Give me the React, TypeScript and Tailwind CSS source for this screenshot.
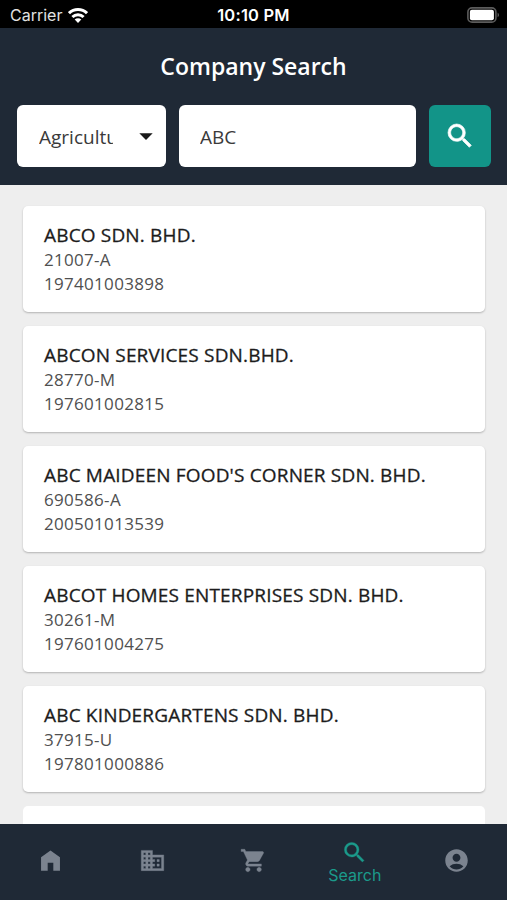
import React, { useState } from "react";
import {
    MdAccountCircle,
    MdArrowDropDown,
    MdBusiness,
    MdSearch,
    MdShoppingCart,
} from "react-icons/md";

type Company = {
    name: string;
    oldNo: string;
    newNo: string;
};

const companies: Company[] = [
    { name: "ABCO SDN. BHD.", oldNo: "21007-A", newNo: "197401003898" },
    { name: "ABCON SERVICES SDN.BHD.", oldNo: "28770-M", newNo: "197601002815" },
    { name: "ABC MAIDEEN FOOD'S CORNER SDN. BHD.", oldNo: "690586-A", newNo: "200501013539" },
    { name: "ABCOT HOMES ENTERPRISES SDN. BHD.", oldNo: "30261-M", newNo: "197601004275" },
    { name: "ABC KINDERGARTENS SDN. BHD.", oldNo: "37915-U", newNo: "197801000886" },
];

function HomeIcon() {
    return (
        <svg viewBox="0 0 24 24" fill="currentColor" className="size-[27px]">
            <path d="M12 3 3.6 9v12h5.9v-7h5v7h5.9V9z" />
        </svg>
    );
}

function WifiIcon() {
    return (
        <svg viewBox="0 0 20 15" fill="none" stroke="currentColor" strokeWidth="3" className="h-[15px] w-5 text-white">
            <path d="M1 5.2a13 13 0 0 1 18 0" />
            <path d="M4.4 9a8 8 0 0 1 11.2 0" />
            <path d="M10 15 6.7 11.6a4.6 4.6 0 0 1 6.6 0z" fill="currentColor" stroke="none" />
        </svg>
    );
}

function BatteryIcon() {
    return (
        <svg viewBox="0 0 33 16" className="h-4 w-[33px]">
            <rect x="0.9" y="0.9" width="28" height="14.2" rx="4.2" fill="none" stroke="#5c5c5c" strokeWidth="1.6" />
            <rect x="2.9" y="2.7" width="24" height="10.6" rx="2" fill="#fff" />
            <path d="M30.6 5.8v4.4c.9-.4 1.4-1.2 1.4-2.2s-.5-1.8-1.4-2.2z" fill="#5c5c5c" />
        </svg>
    );
}

function StatusBar() {
    return (
        <div className="grid h-7 shrink-0 grid-cols-3 items-center bg-black pt-0.5 pr-[7px] pl-[10px] font-['Inter',sans-serif] text-[16px] text-white">
            <div className="flex items-center gap-[6px] text-[#e2e2e2]">
                Carrier
                <WifiIcon />
            </div>
            <span className="pr-[3px] text-center text-[16.5px] font-semibold tracking-[0.2px]">10:10 PM</span>
            <div className="flex justify-end">
                <BatteryIcon />
            </div>
        </div>
    );
}

function CompanyCard({ company }: { company: Company }) {
    return (
        <li className="h-[106px] shrink-0 rounded-[5px] bg-white px-[21px] pt-[17px] whitespace-nowrap shadow-[0_1px_2px_rgba(0,0,0,0.25)]">
            <h2 className="text-[19px] leading-[25px] font-medium tracking-[0.17px] text-[#1c1c1c] [-webkit-text-stroke:0.3px]">
                {company.name}
            </h2>
            <p className="text-[17px] leading-[24px] tracking-[0.3px] text-[#505050]">{company.oldNo}</p>
            <p className="text-[17px] leading-[24px] tracking-[0.3px] text-[#505050]">{company.newNo}</p>
        </li>
    );
}

const tabs = [
    { label: "Home", icon: <HomeIcon /> },
    { label: "Companies", icon: <MdBusiness size={27} className="[&>path:last-child]:stroke-[0.3]" /> },
    { label: "Cart", icon: <MdShoppingCart size={27} className="ml-px [&>path:last-child]:stroke-[0.3]" /> },
    { label: "Search", icon: <MdSearch size={27} className="[&>path:last-child]:stroke-[0.3]" /> },
    { label: "Account", icon: <MdAccountCircle size={27} /> },
];

export default function App() {
    const [query, setQuery] = useState("ABC");
    const [tab, setTab] = useState("Search");

    return (
        <div className="flex h-[900px] w-[507px] flex-col overflow-hidden bg-[#eeeeee] font-['Open_Sans','Noto_Sans',sans-serif]">
            <StatusBar />

            <header className="flex h-[157px] shrink-0 flex-col bg-[#1f2936] px-[17px]">
                <h1 className="pt-[22px] text-center text-[23px] leading-[32px] font-semibold text-white">
                    Company Search
                </h1>
                <div className="mt-[23px] flex h-[62px] gap-[13px]">
                    <button type="button" className="flex w-[149px] shrink-0 items-center rounded-md bg-white pl-[22px] text-[19px] text-[#3a3a3a]">
                        <span className="w-[74px] overflow-hidden pt-0.5 text-left whitespace-nowrap">Agriculture</span>
                        <MdArrowDropDown className="ml-[17px] size-8 shrink-0 text-[#1a1a1a]" />
                    </button>
                    <input
                        value={query}
                        onChange={(e) => setQuery(e.target.value)}
                        className="w-[237px] rounded-md bg-white px-[21px] pt-0.5 text-[19px] text-[#3a3a3a] outline-none"
                    />
                    <button type="button" aria-label="Search" className="flex w-[62px] shrink-0 items-center justify-center rounded-md bg-[#129488] text-white">
                        <MdSearch size={32} className="[&>path:last-child]:stroke-[0.5]" />
                    </button>
                </div>
            </header>

            <ul className="flex min-h-0 flex-1 flex-col gap-[14px] overflow-hidden pt-[21px] pr-[22px] pl-[23px]">
                {companies.map((company) => (
                    <CompanyCard key={company.newNo} company={company} />
                ))}
                <li className="h-[106px] shrink-0 rounded-[5px] bg-white" />
            </ul>

            <nav className="grid h-[76px] shrink-0 grid-cols-5 bg-[#1f2936]">
                {tabs.map(({ label, icon }) => (
                    <button
                        key={label}
                        type="button"
                        aria-label={label}
                        onClick={() => setTab(label)}
                        className={
                            tab === label
                                ? "flex flex-col items-center pt-[15px] text-[#1b9a8b]"
                                : "flex flex-col items-center pt-[23px] text-[#7b838f]"
                        }
                    >
                        {icon}
                        {tab === label && (
                            <span className="font-['Inter',sans-serif] text-[16px] leading-[18px]">{label}</span>
                        )}
                    </button>
                ))}
            </nav>
        </div>
    );
}
